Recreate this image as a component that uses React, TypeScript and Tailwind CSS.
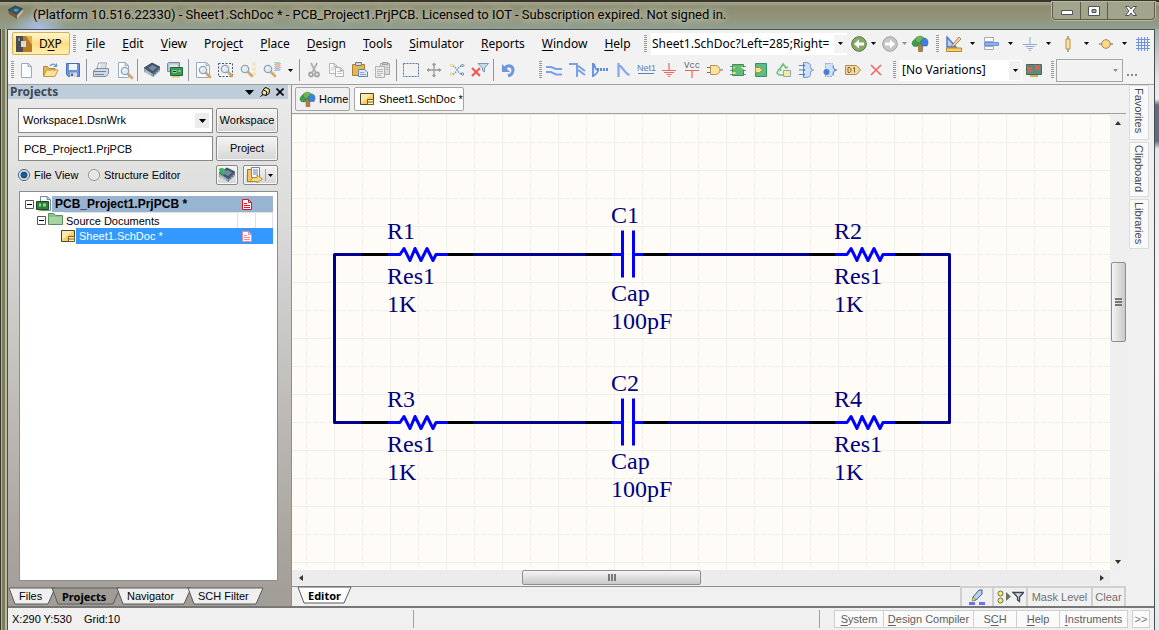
import { useState } from "react";
import type { ReactNode } from "react";

interface IconProps {
  children: ReactNode;
  size?: string;
}

function Icon({ children, size = "w-4 h-4" }: IconProps) {
  return (
    <svg viewBox="0 0 16 16" className={`${size} shrink-0 overflow-visible`} fill="none" aria-hidden="true">
      {children}
    </svg>
  );
}

/* ---------- shared icon parts ---------- */

function Lens({ x = 0, y = 0 }: { x?: number; y?: number }) {
  return (
    <g transform={`translate(${x} ${y})`}>
      <path d="M8 8l4 4" stroke="#d0a868" strokeWidth="2.6" strokeLinecap="round" />
      <circle cx="5" cy="5" r="3.7" fill="#dcecf6" stroke="#94a3b0" strokeWidth="1.3" />
      <path d="M3 5a2 2 0 0 1 2-2" stroke="#fff" strokeWidth="1" />
    </g>
  );
}

function Sheet({ x = 2, y = 0, w = 11, h = 14, line = "#9aa9c2" }: { x?: number; y?: number; w?: number; h?: number; line?: string }) {
  return (
    <g transform={`translate(${x} ${y})`}>
      <path d={`M.5 .5h${w - 4}l3 3v${h - 3}h-${w - 1}z`} fill="#fbfdff" stroke={line} />
      <path d={`M${w - 4} .5v3h3`} fill="#d7e1ee" stroke={line} />
    </g>
  );
}

function TreeShape() {
  return (
    <>
      <path d="M6.500 7h4v8.500h-4z" fill="#b0803c" stroke="#7d5a2b" strokeWidth=".6" />
      <path d="M0 8c0-3 2-5 5-5l2 2-1 5c-2 1-5 1-6-2z" fill="#39a045" stroke="#23702f" strokeWidth=".5" />
      <path d="M3 3c1-3 7-4 9-1l-3 4-4 1z" fill="#6db552" stroke="#2e7a34" strokeWidth=".5" />
      <path d="M8 6l4-4c4 0 5 4 3 8l-5 0z" fill="#3b82d8" stroke="#24568c" strokeWidth=".5" />
    </>
  );
}

function SchDocIcon() {
  return (
    <Icon>
      <path d="M1.500 2.500h13v11h-13z" fill="#fbcf62" stroke="#4a4432" />
      <path d="M2 3h11L2 12z" fill="#fdeaae" />
      <path d="M8.500 8.500h6v5h-6zM8.500 11h6" fill="#fff3c4" stroke="#7a5f14" />
    </Icon>
  );
}

function Chip() {
  return (
    <>
      <path d="M0 6l8-5 8 4-7 7z" fill="#43566b" stroke="#243445" strokeWidth=".7" />
      <path d="M0 6l9 6v3L0 10z" fill="#93a3b5" />
      <path d="M9 12l7-7v4l-7 6z" fill="#64788d" />
      <path d="M4 6l4.500-3L13 5.500 9 9z" fill="#75899f" />
      <path d="M2 9v2M4 10v2.500M6 11.500v2.500M11 12v2M13 10v2.500M15 8v2.500" stroke="#e8edf3" strokeWidth=".8" />
    </>
  );
}

/* ---------- toolbar icons ---------- */

const fileIcons: ReactNode[] = [
  <Sheet x={2} y={1} />,
  <>
    <path d="M1.500 14V4.500h4l1.500 2h6V14z" fill="#e6b455" stroke="#b48a35" />
    <path d="M1.500 14.500l3-6.500h11.500l-3 6.500z" fill="#fde09a" stroke="#c79a43" />
    <path d="M8 4c2-3 5-2 6 0M14.500 1.500v3h-3" stroke="#6d93c9" strokeWidth="1.200" />
  </>,
  <>
    <path d="M1.500 1.500h13v13h-11l-2-2z" fill="#6d91dc" stroke="#4c6cb4" />
    <path d="M4 2h8v6H4z" fill="#f0f5fd" />
    <path d="M5 10.500h7V15H5z" fill="#d3dbe8" />
    <path d="M6 11.500h2V14H6z" fill="#46619f" />
  </>,
];

const printIcons: ReactNode[] = [
  <>
    <path d="M4 7l1.500-6h8L12 7z" fill="#fff" stroke="#8f9cb1" />
    <path d="M7 3h5M6.500 5h5" stroke="#b4bfcd" />
    <path d="M.5 9L3 6.500h12.500v5L13 14.500H.5z" fill="#cfd8e3" stroke="#8390a4" />
    <path d="M1 9.500h12M2 12.500h9" stroke="#76849a" />
  </>,
  <>
    <Sheet x={2} y={0} w={11} h={15} />
    <Lens x={4} y={4} />
  </>,
];

const deviceIcons: ReactNode[] = [
  <Chip />,
  <>
    <path d="M.5 1.500l1-1h11v9H.5z" fill="#b5c4d4" stroke="#7c8b9c" />
    <path d="M2.500 2.500h8v3h-8z" fill="#dfe8f1" />
    <path d="M3.500 5.500h12v8h-12z" fill="#3d9a5c" stroke="#22683a" />
    <path d="M5.500 8h4v3h-4zM11.500 8h2v2h-2z" fill="#8fd09c" />
    <path d="M6 9h3v1H6z" fill="#123f22" />
    <path d="M5 14h8v1.500H5z" fill="#e4c763" />
  </>,
];

const zoomIcons: ReactNode[] = [
  <>
    <Sheet x={1} y={0} w={14} h={15} />
    <Lens x={3} y={3} />
  </>,
  <>
    <path d="M.5 1.500h14v13H.5z" stroke="#3e5774" strokeDasharray="2 1.500" />
    <Lens x={2} y={2} />
  </>,
  <>
    <Lens x={-1} y={2} />
    <path d="M13 .5L14.500 2 13 3.500 11.500 2zM13 5.500L14.500 7 13 8.500 11.500 7zM13 10.500l1.500 1.500-1.500 1.500-1.500-1.500z" stroke="#e6cf7a" fill="#fff8d8" strokeWidth=".8" />
  </>,
  <>
    <Lens x={-1} y={2} />
    <path d="M10.500 .5h5M11.500 1.500h5M10.500 2.500h5" stroke="#67bd63" strokeDasharray="1 1" />
    <path d="M11.500 3.500h5M10.500 4.500h5M11.500 5.500h5" stroke="#ef7a73" strokeDasharray="1 1" />
    <path d="M10.500 6.500h5M11.500 7.500h5M10.500 8.500h5" stroke="#6c9be0" strokeDasharray="1 1" />
  </>,
];

const clipIcons: ReactNode[] = [
  <>
    <path d="M5 1l4.500 9M11 1L6.500 10" stroke="#b0b0b0" strokeWidth="1.800" />
    <circle cx="5" cy="12.500" r="2" stroke="#a5a5a5" strokeWidth="1.800" />
    <circle cx="11" cy="12.500" r="2" stroke="#a5a5a5" strokeWidth="1.800" />
  </>,
  <>
    <Sheet x={0} y={1} w={9} h={10} line="#b5b5b5" />
    <Sheet x={6} y={5} w={9} h={9} line="#b0b0b0" />
    <path d="M2 6h4M2 8h3M8 9.500h5M8 11.500h5" stroke="#c4c4c4" />
  </>,
  <>
    <path d="M.5 2.500h12v11H.5z" fill="#e8b64e" stroke="#a9802f" />
    <path d="M3.500 .5h6v3h-6z" fill="#cfd5de" stroke="#75808f" />
    <path d="M6.500 7.500h6l3 2.500v4.500h-9z" fill="#dce9f8" stroke="#6483ad" />
    <path d="M8 10.500h4M8 12.500h6" stroke="#8aa5cb" />
  </>,
  <>
    <path d="M5.500 1.500h9v11h-9z" fill="#d8d8d8" stroke="#a9a9a9" />
    <path d="M7.500 .5h5v2h-5z" fill="#c3c3c3" stroke="#a0a0a0" />
    <path d="M.5 4.500h9v11h-9z" fill="#ececec" stroke="#b1b1b1" />
    <path d="M2 7.500h6M2 9.500h6M2 11.500h6M2 13.500h4M11 5.500h2M11 7.500h2" stroke="#b8b8b8" />
  </>,
];

const editIcons: ReactNode[] = [
  <path d="M.5 1.500h15v13H.5z" stroke="#5375a8" strokeDasharray="2 1" />,
  <path d="M8 1.500v13M1.500 8h13M6.500 3L8 1.500 9.500 3M6.500 13L8 14.500 9.500 13M3 6.500L1.500 8 3 9.500M13 6.500L14.500 8 13 9.500" stroke="#9a9a9a" strokeWidth="1.300" />,
  <>
    <path d="M4 4c3 0 5 8 9 8M4 12c3 0 5-8 9-8" stroke="#6f93b5" strokeDasharray="1.500 1" strokeWidth="1.500" />
    <path d="M2.500 2L4 3.500 2.500 5 1 3.500zM2.500 10.500L4 12l-1.500 1.500L1 12z" fill="#fff6c7" stroke="#d9c263" strokeWidth=".8" />
    <path d="M13.500 2L15 3.500 13.500 5 12 3.500zM13.500 10.500L15 12l-1.500 1.500L12 12z" fill="#cfe2e8" stroke="#45708c" strokeWidth=".8" />
  </>,
  <>
    <path d="M6 1.500h10.500L12.500 6v4l-2-1.500V6z" fill="#c5d8ec" stroke="#7898bd" />
    <path d="M0 6l8 8M8 6l-8 8" stroke="#ee5a50" strokeWidth="2.200" />
  </>,
];

const wiringIcons: ReactNode[] = [
  <path d="M0 5h5l5 2h6M0 10h5l5 2.500h6" stroke="#7aa0ea" strokeWidth="2" />,
  <path d="M0 2h8v13M8 4c3 0 3 2 8 5M8 8c3 0 3 2 8 5" stroke="#7aa0ea" strokeWidth="2" />,
  <>
    <path d="M1 1v14" stroke="#5d8be0" strokeWidth="1.800" />
    <path d="M1 2c3 0 1 5.500 4 5.500S4 13 1 14" stroke="#5d8be0" strokeWidth="1.600" />
    <path d="M5 7.500h11" stroke="#5d8be0" strokeWidth="3" strokeDasharray="2 1" />
  </>,
  <path d="M3.500 1v14M3.500 4h2l5 6c1 2 3 2.500 4 3" stroke="#83a7ee" strokeWidth="2.200" />,
  <>
    <text x="-1" y="9" fontSize="9" fill="#5b7fbd" fontFamily="Liberation Sans, sans-serif">
      Net1
    </text>
    <path d="M0 11.500h16" stroke="#5b7fbd" />
  </>,
  <path d="M8 1v7M1 8.500h14M3 10.500h10M5.500 12.500h5M7 14.500h2" stroke="#e9695f" strokeWidth="1.200" />,
  <>
    <text x="0" y="6" fontSize="9" fill="#5f5f6b" fontFamily="Liberation Mono, monospace">
      Vcc
    </text>
    <path d="M1 8.500h14M8 8.500v7.500" stroke="#e8645a" strokeWidth="1.200" />
  </>,
  <>
    <path d="M0 5.500h4M0 10.500h4M12 8h4" stroke="#6f6f6f" />
    <path d="M3.500 3.500h5c3 0 4.500 2.500 4.500 4.500s-1.500 4.500-4.500 4.500h-5z" fill="#fbe39c" stroke="#b5905a" />
  </>,
  <>
    <path d="M0 4.500h16M0 8.500h16M0 12.500h16" stroke="#5b8dd6" />
    <path d="M2.500 2.500h11v11h-11z" fill="#62ba76" stroke="#3e8f57" />
    <path d="M2.500 5h3l-1.500 2zM10 5h4v3zM2.500 10h3v2h-3z" fill="#f8e46e" />
  </>,
  <>
    <path d="M2.500 1.500h11v13h-11z" fill="#5cbd85" stroke="#3b9164" />
    <path d="M2.500 5.500h4l3 2.500-3 2.500h-4z" fill="#fbe67a" stroke="#a5924e" />
  </>,
  <>
    <path d="M4 7l3-5 3 4M12 5l-2 1-1-2M3 7l-2 4 2 2h4M2 8l2-1 1 2" stroke="#6ebf78" strokeWidth="1.600" />
    <path d="M7.500 8.500h7v6h-7z" fill="#faeaa0" stroke="#8aa3c8" />
  </>,
  <>
    <path d="M4.500 .5c6 0 7 1 7 4 0 2 1 3.500 3 3.500-2 0-3 1.500-3 3.500 0 3-1 4-7 4z" fill="#cfe0f8" stroke="#6b90cc" />
    <path d="M0 3.500h6M0 8h6M0 12.500h6M4 2l2 1.500L4 5M4 6.500L6 8 4 9.500M4 11l2 1.500L4 14" stroke="#4e7fcc" />
  </>,
  <>
    <path d="M3.500 1.500h5c3 0 3 1 3 3s1 3.500 3 3.500c-2 0-3 1.500-3 3.500s0 3-3 3h-5z" fill="#cfe0f8" stroke="#86a7dc" strokeDasharray="2 1" />
    <path d="M11 4c0 2 1 4 3.500 4-2.500 0-3.500 2-3.500 5" stroke="#4e7fcc" />
    <circle cx="4.500" cy="10" r="3" fill="#4a7fd0" />
  </>,
  <>
    <path d="M.5 3.500h11l4 4.500-4 4.500H.5z" fill="#f6d99b" stroke="#b08a54" />
    <path d="M3 5.500v5M3 5.500h1.500c2 0 2 5 0 5H3M8 6.500l1.500-1v5" stroke="#7d6236" />
  </>,
  <path d="M3 3l10 10M13 3L3 13" stroke="#ee6a5f" strokeWidth="1.600" />,
];

/* ---------- small controls ---------- */

function Handle() {
  return (
    <div className="w-[3px] h-[18px] shrink-0 bg-[repeating-linear-gradient(to_bottom,#9a9a9a_0px,#9a9a9a_1px,transparent_1px,transparent_2px)]" />
  );
}

function Divider() {
  return <div className="w-px h-[22px] mx-[2px] shrink-0 bg-[#8f959c]" />;
}

function Caret({ muted = false }: { muted?: boolean }) {
  return (
    <svg viewBox="0 0 5 3" className="w-[5px] h-[3px] shrink-0" aria-hidden="true">
      <path d="M0 0h5L2.500 3z" fill={muted ? "#8f8f8f" : "#000"} />
    </svg>
  );
}

function ToolButtons({ icons, label }: { icons: ReactNode[]; label: string }) {
  return (
    <div className="flex shrink-0">
      {icons.map((icon, i) => (
        <button key={i} type="button" aria-label={`${label} ${i + 1}`} className="w-[23px] h-[23px] flex items-center justify-center">
          <Icon>{icon}</Icon>
        </button>
      ))}
    </div>
  );
}

function MenuTool({ icon, label, muted }: { icon: ReactNode; label: string; muted?: boolean }) {
  return (
    <button type="button" aria-label={label} className="flex items-center h-6 w-[38px] pl-[7px] gap-[8px] shrink-0">
      <Icon>{icon}</Icon>
      <Caret muted={muted} />
    </button>
  );
}

/* Text with its mnemonic letter underlined */
function Mnemonic({ text, at }: { text: string; at: number }) {
  return (
    <span>
      {text.slice(0, at)}
      <span className="underline underline-offset-2">{text[at]}</span>
      {text.slice(at + 1)}
    </span>
  );
}

/* ---------- window chrome ---------- */

function TitleBar() {
  return (
    <header className="flex items-start h-[29px] shrink-0 pl-[8px] border-t-2 border-[#38352b] bg-[radial-gradient(ellipse_28px_16px_at_38px_26px,#a9bfe8_0%,transparent_100%),linear-gradient(to_bottom,#a5a68c_0px,#8b8c70_5px,#929378_16px,#8fa298_29px)]">
      <div className="mt-[3px]">
        <Icon>
          <path d="M0 5l7-4 8 3-6 6z" fill="#35526b" stroke="#203242" strokeWidth=".7" />
          <path d="M0 5l9 5v4L1 9z" fill="#6d5c42" />
          <path d="M9 10l6-6v3l-6 7z" fill="#c9b88f" />
          <path d="M5 5l3-1.500L11 5 8 7z" fill="#4ba3c7" />
        </Icon>
      </div>
      <h1 className="ml-[9px] mt-[3px] flex-1 text-[13px] leading-[20px] whitespace-nowrap text-black [text-shadow:0_0_6px_#d5d6c4,0_0_10px_#d5d6c4]">
        (Platform 10.516.22330) - Sheet1.SchDoc * - PCB_Project1.PrjPCB. Licensed to IOT - Subscription expired. Not signed in.
      </h1>
      <div className="flex h-[18px] mr-1 border border-t-0 border-[#5c5d4c] rounded-b-[4px] bg-[#a3a48c] shadow-[0_0_0_1px_#b9baa6]">
        <button type="button" aria-label="Minimize" className="w-[28px] flex items-center justify-center border-r border-[#5c5d4c]">
          <svg viewBox="0 0 12 5" className="w-3 h-[5px] mt-[4px]">
            <path d="M.5 .5h11v4H.5z" fill="#fff" stroke="#50545e" />
          </svg>
        </button>
        <button type="button" aria-label="Maximize" className="w-[27px] flex items-center justify-center border-r border-[#5c5d4c]">
          <svg viewBox="0 0 12 10" className="w-3 h-[10px]">
            <path d="M.5 .5h11v9H.5zM4 3.500v3h4v-3z" fill="#fff" fillRule="evenodd" stroke="#50545e" />
          </svg>
        </button>
        <button type="button" aria-label="Close" className="w-[46px] flex items-center justify-center">
          <svg viewBox="0 0 12 10" className="w-3 h-[10px]">
            <path d="M.5 .5H4l2 2.500L8 .5h3.500L8 5l3.500 4.500H8L6 7 4 9.500H.5L4 5z" fill="#fff" stroke="#50545e" />
          </svg>
        </button>
      </div>
    </header>
  );
}

const menus = [
  { text: "File", at: 0 },
  { text: "Edit", at: 0 },
  { text: "View", at: 0 },
  { text: "Project", at: 5 },
  { text: "Place", at: 0 },
  { text: "Design", at: 0 },
  { text: "Tools", at: 0 },
  { text: "Simulator", at: 0 },
  { text: "Reports", at: 0 },
  { text: "Window", at: 0 },
  { text: "Help", at: 0 },
];

function MenuBar() {
  return (
    <div className="flex items-center h-[27px] shrink-0 pl-[4px]">
      <button
        type="button"
        className="flex items-center gap-[7px] w-[58px] h-[23px] pl-[3px] border border-[#d8b04e] rounded-[2px] bg-linear-to-b from-[#fff6d2] via-[#ffdf85] to-[#ffeeb0] text-[12px]"
      >
        <Icon>
          <path d="M0 0h7v16H0z" fill="#4c4c4c" />
          <path d="M5 5h4v6H5z" fill="#d8d8d8" />
          <path d="M7 0h9v16H7v-5h3V5H7z" fill="#b87a24" />
          <path d="M10 0h6v9z" fill="#e4b15a" />
          <path d="M2 2h2v3H2z" fill="#8a8a8a" />
        </Icon>
        <Mnemonic text="DXP" at={1} />
      </button>
      <div className="w-[3px]" />
      <Handle />
      <nav className="flex gap-px w-[564px] shrink-0 pl-[2px] text-[12px] leading-[20px]">
        {menus.map((m) => (
          <button key={m.text} type="button" className="px-2">
            <Mnemonic text={m.text} at={m.at} />
          </button>
        ))}
      </nav>
      <div className="w-[4px]" />
      <Handle />
      <label className="flex items-center ml-[4px] w-[196px] h-[22px] shrink-0 bg-white">
        <input
          aria-label="Address"
          defaultValue="Sheet1.SchDoc?Left=285;Right=1110"
          className="w-[179px] mr-[4px] h-[20px] pl-px text-[12px] bg-transparent outline-none"
        />
        <span className="flex items-center justify-center w-[13px] h-[18px] bg-[#f3f3f3]">
          <Caret />
        </span>
      </label>
      <div className="flex items-center ml-[4px]">
        <button type="button" aria-label="Back" className="flex items-center gap-[4px] w-[31px]">
          <Icon>
            <circle cx="8" cy="8" r="7.300" fill="#88a868" stroke="#577544" />
            <path d="M3 8l5-4.500v3h5v3H8v3z" fill="#fff" />
          </Icon>
          <Caret />
        </button>
        <button type="button" aria-label="Forward" className="flex items-center gap-[4px] w-[30px]">
          <Icon>
            <circle cx="8" cy="8" r="7.300" fill="#c6c6c6" stroke="#a2a2a2" />
            <path d="M13 8L8 3.500v3H3v3h5v3z" fill="#fff" />
          </Icon>
          <Caret muted />
        </button>
        <button type="button" aria-label="Home page">
          <Icon>
            <TreeShape />
          </Icon>
        </button>
      </div>
      <div className="w-[8px]" />
      <Handle />
      <div className="flex items-center">
        <MenuTool
          label="Utilities"
          icon={
            <>
              <path d="M1 1v10h9z" fill="#b8cdf3" stroke="#4c76c6" strokeWidth="1.400" />
              <path d="M6 9l7-8 2 2-7 7-3 1z" fill="#efd3a8" stroke="#a06f4b" strokeWidth=".8" />
              <path d="M.5 12h15v3.500H.5z" fill="#f7cf63" stroke="#b38a35" />
            </>
          }
        />
        <MenuTool
          label="Align"
          icon={
            <>
              <path d="M.5 1.500h9v4h-9zM.5 10.500h9v3h-9z" fill="#fff" stroke="#9aa9c4" />
              <path d="M.5 6.500h14v3H.5z" fill="#8db1ea" stroke="#6e93d2" />
            </>
          }
        />
        <MenuTool label="Power sources" icon={<path d="M8 1v7M1 8.500h14M3.500 10.500h9M5.500 12.500h5M7 14.500h2" stroke="#8fa9d8" />} />
        <MenuTool
          label="Digital devices"
          icon={
            <>
              <path d="M8 0v16" stroke="#5b5b5b" />
              <path d="M6 3h4v10H6z" fill="#fbe29a" stroke="#b88f4c" />
            </>
          }
        />
        <MenuTool
          label="Simulation sources"
          icon={
            <>
              <path d="M1 8h14" stroke="#5b5b5b" />
              <circle cx="8" cy="8" r="4.300" fill="#fbd98b" stroke="#b0803c" />
            </>
          }
        />
        <button type="button" aria-label="Grids" className="ml-[6px]">
          <Icon>
            <path d="M3.500 1v14M6.500 1v14M9.500 1v14M12.500 1v14M1 3.500h14M1 6.500h14M1 9.500h14M1 12.500h14" stroke="#6f93e2" />
          </Icon>
        </button>
      </div>
    </div>
  );
}

function ToolBar() {
  return (
    <div className="flex items-center h-[28px] shrink-0 pl-[3px] pb-px border-b border-[#a0a0a0]">
      <Handle />
      <div className="w-px" />
      <ToolButtons icons={fileIcons} label="File" />
      <Divider />
      <ToolButtons icons={printIcons} label="Print" />
      <Divider />
      <ToolButtons icons={deviceIcons} label="Device" />
      <Divider />
      <ToolButtons icons={zoomIcons} label="Zoom" />
      <button type="button" aria-label="More" className="flex items-center justify-center w-[14px] h-5">
        <Caret />
      </button>
      <Divider />
      <ToolButtons icons={clipIcons} label="Clipboard" />
      <Divider />
      <ToolButtons icons={editIcons} label="Edit" />
      <Divider />
      <ToolButtons
        label="Undo"
        icons={[
          <>
            <path d="M5 6c3-4 8-2 8 2 0 3-2 5-5 6" stroke="#6f97dc" strokeWidth="3" />
            <path d="M2 2v8h8z" fill="#6f97dc" />
          </>,
        ]}
      />
      <div className="w-[20px]" />
      <Handle />
      <ToolButtons icons={wiringIcons} label="Wiring" />
      <div className="w-[6px]" />
      <Handle />
      <div className="relative ml-[3px] w-[123px] h-[21px] shrink-0 bg-white">
        <select aria-label="Variations" className="block appearance-none w-full h-full pl-[3px] text-[12px] leading-[20px] bg-transparent outline-none">
          <option>[No Variations]</option>
        </select>
        <span className="absolute right-px top-px w-[12px] h-[19px] flex items-center justify-center bg-[#f0f0f0] pointer-events-none">
          <Caret />
        </span>
      </div>
      <ToolButtons
        label="Variants"
        icons={[
          <>
            <path d="M.5 2.500h15v10H.5z" fill="#5b8a76" stroke="#456a5a" />
            <path d="M4 13h8v2H4z" fill="#c9b14d" />
            <path d="M1 5l5 5M6 5l-5 5M9 3l5 5M14 3L9 8" stroke="#ef5b57" strokeWidth="1.600" />
          </>,
        ]}
      />
      <div className="w-[6px]" />
      <Handle />
      <div className="relative ml-[2px] w-[67px] h-[23px] shrink-0">
        <select aria-label="Filter" disabled className="block appearance-none w-full h-full border border-[#a5a5a5] bg-[#f2f2f2]">
          <option></option>
        </select>
        <span className="absolute right-[5px] top-[10px] pointer-events-none">
          <Caret muted />
        </span>
      </div>
      <button type="button" aria-label="Overflow" className="ml-[4px] mt-[10px] flex gap-[2px]">
        <span className="w-[2px] h-[2px] bg-[#8a8a8a]" />
        <span className="w-[2px] h-[2px] bg-[#8a8a8a]" />
        <span className="w-[2px] h-[2px] bg-[#8a8a8a]" />
      </button>
    </div>
  );
}

/* ---------- left panel ---------- */

function SlantedTab({ label, width, fill, bold }: { label: string; width: number; fill: string; bold?: boolean }) {
  return (
    <button type="button" className="relative h-[17px] shrink-0 -mr-[3px] pl-[10px] text-left" style={{ width }}>
      <svg className="absolute inset-0 w-full h-full overflow-visible" aria-hidden="true">
        <polygon points={`0,0 ${width},0 ${width - 7},16 6,16`} fill={fill} stroke="#5a5a5a" />
      </svg>
      <span className={`relative block text-[11px] leading-[15px] ${bold ? "font-bold font-['Noto_Sans',sans-serif]" : ""}`}>{label}</span>
    </button>
  );
}

function ModifiedMark({ color }: { color: string }) {
  return (
    <svg viewBox="0 0 10 11" className="w-[10px] h-[11px]" aria-hidden="true">
      <path d="M.5 .5h6l3 3v7h-9z" fill="#fff" stroke={color} />
      <path d="M6.500 .5v3h3M2 4.500h3M2 6.500h6M2 8.500h6" stroke={color} fill="none" />
    </svg>
  );
}

function Expander() {
  return (
    <svg viewBox="0 0 9 9" className="w-[9px] h-[9px] shrink-0" aria-hidden="true">
      <path d="M.5 .5h8v8h-8z" fill="#fff" stroke="#555" />
      <path d="M2 4.500h5" stroke="#000" />
    </svg>
  );
}

function ProjectTree() {
  return (
    <ul className="flex-1 min-h-0 pt-[4px] pl-[5px] pr-[4px] bg-white border border-[#878d93] text-[11px] leading-[16px]">
      <li>
        <div className="flex items-center h-4">
          <Expander />
          <div className="w-[2px]" />
          <Icon>
            <Sheet x={4} y={0} w={11} h={14} line="#6f86a8" />
            <path d="M.5 5.500h12v8H.5z" fill="#2f7d3a" stroke="#174c20" />
            <path d="M3 7.500h2v3H3zM7 7.500h3v3H7z" fill="#9ed48b" />
            <path d="M3 14v1.500M6 14v1.500M9 14v1.500" stroke="#cfa93c" />
          </Icon>
          <div className="flex items-center flex-1 h-4 pl-[3px] bg-[#99b4d1]">
            <span className="flex-1 font-bold text-[12px]">PCB_Project1.PrjPCB *</span>
            <span className="w-[31px]">
              <ModifiedMark color="#e8101c" />
            </span>
          </div>
        </div>
        <ul>
          <li>
            <div className="flex items-center h-4 pl-[12px]">
              <Expander />
              <div className="w-[2px]" />
              <Icon>
                <path d="M.5 12.500v-11h5l2 2h7v9z" fill="#8cc28c" stroke="#5a8d5f" />
                <path d="M1 5h13v7H1z" fill="#a5d3a2" />
              </Icon>
              <span className="flex-1 pl-[2px] border-t border-[#e2e2e2] h-4">Source Documents</span>
              <span className="w-[18px] h-4 border-l border-t border-[#e2e2e2]" />
              <span className="w-[18px] h-4 border-x border-t border-[#e2e2e2]" />
            </div>
            <ul>
              <li className="flex items-center h-4 pl-[35px]">
                <SchDocIcon />
                <button type="button" className="flex items-center flex-1 h-4 pl-[3px] bg-[#3399ff] text-white text-left">
                  <span className="flex-1">Sheet1.SchDoc *</span>
                  <span className="w-[31px]">
                    <ModifiedMark color="#f28a94" />
                  </span>
                </button>
              </li>
            </ul>
          </li>
        </ul>
      </li>
    </ul>
  );
}

const panelButton = "border border-[#8a8a8a] rounded-[2px] bg-linear-to-b from-[#f4f4f4] to-[#d6d6d6] shadow-[inset_0_0_0_1px_#fafafa]";
const radio =
  "appearance-none w-3 h-3 rounded-full border border-[#8e8f8f] bg-[#e6e6e6] shadow-[inset_0_0_0_1px_#f8f8f8] checked:border-[#41597a] checked:bg-[radial-gradient(circle,#1c6fb0_0px,#1b4a7c_3px,#e8f0f6_4px)]";

function ProjectsPanel() {
  const [view, setView] = useState("file");

  return (
    <aside className="flex flex-col w-[283px] shrink-0 bg-[linear-gradient(to_bottom,#ebebeb,#dcdcdb_25%,#a8a39c_90%,#a29d96)]">
      <div className="flex items-center h-[14px] w-[280px] shrink-0 pl-[2px] pr-[4px] bg-[#bfcddb]">
        <h2 className="flex-1 text-[12px] leading-[14px] font-bold text-[#3c4856] font-['Noto_Sans',sans-serif]">Projects</h2>
        <div className="flex items-center gap-[6px]">
          <button type="button" aria-label="Panel menu">
            <svg viewBox="0 0 9 5" className="w-[9px] h-[5px]">
              <path d="M0 0h9L4.500 5z" />
            </svg>
          </button>
          <button type="button" aria-label="Pin panel">
            <svg viewBox="0 0 10 10" className="w-[10px] h-[10px]">
              <path d="M4 1.500l2-1 3.500 2-.5 4-3 2-3.500-1-.5-2z" fill="#f2ea9a" stroke="#000" />
              <path d="M4 3l3 2-1 3M3 7.500L.5 9.500" stroke="#000" fill="none" />
            </svg>
          </button>
          <button type="button" aria-label="Close panel">
            <svg viewBox="0 0 8 8" className="w-2 h-2">
              <path d="M.5 .5l7 7M7.500 .5l-7 7" stroke="#000" strokeWidth="1.600" />
            </svg>
          </button>
        </div>
      </div>

      <div className="flex flex-col flex-1 min-h-0 w-[280px] pt-[9px] px-[10px] pb-[7px] text-[11px]">
        <div className="flex gap-[3px]">
          <div className="relative flex-1 h-[25px]">
            <select aria-label="Workspace" className="block appearance-none w-full h-full pl-[4px] bg-white border border-[#8a8a8a]">
              <option>Workspace1.DsnWrk</option>
            </select>
            <span className="absolute right-[4px] top-[5px] flex items-center justify-center w-[14px] h-[15px] bg-[#ececec] pointer-events-none">
              <svg viewBox="0 0 7 4" className="w-[7px] h-1">
                <path d="M0 0h7L3.500 4z" />
              </svg>
            </span>
          </div>
          <button type="button" className={`w-[62px] ${panelButton}`}>
            Workspace
          </button>
        </div>
        <div className="flex gap-[3px] mt-[3px]">
          <input aria-label="Project" defaultValue="PCB_Project1.PrjPCB" className="flex-1 min-w-0 h-[25px] pl-[5px] bg-white border border-[#8a8a8a]" />
          <button type="button" className={`w-[62px] ${panelButton}`}>
            Project
          </button>
        </div>

        <div className="flex items-center h-5 mt-[4px] mb-[6px]">
          <label className="flex items-center gap-[4px] w-[70px] whitespace-nowrap">
            <input type="radio" name="view" className={radio} checked={view === "file"} onChange={() => setView("file")} />
            File View
          </label>
          <label className="flex items-center gap-[4px] flex-1">
            <input type="radio" name="view" className={radio} checked={view === "structure"} onChange={() => setView("structure")} />
            Structure Editor
          </label>
          <button type="button" aria-label="Refresh" className={`flex items-center justify-center w-[22px] h-5 mr-[5px] ${panelButton}`}>
            <Icon>
              <Chip />
              <path d="M0 2c2-2 6-1 7 2L5 8 1 6z" fill="#3fae57" />
              <path d="M3 2l3 1-1 3z" fill="#4d9de0" />
            </Icon>
          </button>
          <button type="button" aria-label="Options" className={`flex items-center w-[35px] h-5 pl-[3px] ${panelButton}`}>
            <Icon>
              <path d="M.5 2.500h6v12h-6z" fill="#f5c659" stroke="#9f7a2b" />
              <path d="M4.500 .5h8v10h-8z" fill="#fff" stroke="#6f86b0" />
              <path d="M6 3h5M6 5h5M6 7h5" stroke="#5b7fc5" />
              <path d="M3 14.500l3-4h4V8l5.500 4-5.500 4v-1.500z" fill="#fbd87a" stroke="#a37d2f" strokeWidth=".8" />
            </Icon>
            <span className="w-px h-3 mx-[2px] bg-[#a0a0a0]" />
            <Caret />
          </button>
        </div>

        <div className="flex flex-1 min-h-0 pl-px">
          <ProjectTree />
        </div>
      </div>

      <div className="flex items-start h-[18px] shrink-0 pl-[1px]">
        <SlantedTab label="Files" width={46} fill="#f0f0f0" />
        <SlantedTab label="Projects" width={68} fill="#a09b94" bold />
        <SlantedTab label="Navigator" width={74} fill="#f0f0f0" />
        <SlantedTab label="SCH Filter" width={75} fill="#f0f0f0" />
      </div>
    </aside>
  );
}

/* ---------- schematic ---------- */

interface PartProps {
  x: number;
  y: number;
  name: string;
}

function Resistor({ x, y, name }: PartProps) {
  return (
    <g transform={`translate(${x} ${y})`}>
      <path d="M-28 0H0M57 0h26" stroke="#000" strokeWidth="3" />
      <path d="M-2 0h12l4-6 6 12 5-12 6 12 6-12 6 12 3-6h12" stroke="#0000ff" strokeWidth="3" fill="none" strokeLinejoin="round" />
      <text x="-3" y="-16">{name}</text>
      <text x="-3" y="29">Res1</text>
      <text x="-3" y="57">1K</text>
    </g>
  );
}

function Capacitor({ x, y, name }: PartProps) {
  return (
    <g transform={`translate(${x} ${y})`}>
      <path d="M-26 0H0M30 0h26" stroke="#000" strokeWidth="3" />
      <path d="M0 0h11M10.500-24v47M21.500-24v47M21 0h10" stroke="#0000ff" strokeWidth="3" />
      <text x="-1" y="-32">{name}</text>
      <text x="-1" y="46">Cap</text>
      <text x="-1" y="74">100pF</text>
    </g>
  );
}

function Schematic() {
  return (
    <svg className="block w-full h-full text-[24px] font-['Liberation_Serif',serif]" role="img" aria-label="Schematic sheet">
      <defs>
        <pattern id="grid" x="42" y="56" width="56" height="56" patternUnits="userSpaceOnUse">
          <path d="M.5 0v56M0 .5h56" stroke="#efefea" />
          <path d="M28.500 0v56M0 28.500h56" stroke="#efefea" strokeDasharray="5 2" />
        </pattern>
      </defs>
      <rect width="100%" height="100%" fill="#fffcf7" />
      <rect width="100%" height="100%" fill="url(#grid)" />
      <path
        d="M71 140.500H42.500v168H71M180 140.500h115M375 140.500h143M627 140.500h30.500v168H627M180 308.500h115M375 308.500h143"
        fill="none"
        stroke="#000090"
        strokeWidth="3"
        strokeLinejoin="round"
      />
      <g fill="#000080">
        <Resistor x={98} y={140.5} name="R1" />
        <Capacitor x={320} y={140.5} name="C1" />
        <Resistor x={545} y={140.5} name="R2" />
        <Resistor x={98} y={308.5} name="R3" />
        <Capacitor x={320} y={308.5} name="C2" />
        <Resistor x={545} y={308.5} name="R4" />
      </g>
    </svg>
  );
}

/* ---------- editor area ---------- */

function VerticalScroll() {
  return (
    <div className="flex flex-col items-center w-4 shrink-0 bg-[#efefef]">
      <div className="h-[17px] flex items-center">
        <svg viewBox="0 0 6 4" className="w-[6px] h-1">
          <path d="M0 4h6L3 0z" fill="#333" />
        </svg>
      </div>
      <div className="grow-[131]" />
      <div className="flex flex-col items-center justify-center gap-px w-[15px] h-[80px] border border-[#8f8f8f] rounded-[2px] bg-linear-to-r from-[#f5f5f5] to-[#c9c9c9]">
        <span className="w-[7px] h-[2px] bg-[#777]" />
        <span className="w-[7px] h-[2px] bg-[#777]" />
        <span className="w-[7px] h-[2px] bg-[#777]" />
      </div>
      <div className="grow-[212]" />
      <div className="h-[17px] flex items-center">
        <svg viewBox="0 0 6 4" className="w-[6px] h-1">
          <path d="M0 0h6L3 4z" fill="#333" />
        </svg>
      </div>
    </div>
  );
}

function HorizontalScroll() {
  return (
    <div className="flex items-center h-[15px] mb-px mr-4 shrink-0 bg-[#ececec]">
      <div className="w-[17px] flex justify-center">
        <svg viewBox="0 0 4 6" className="w-1 h-[6px]">
          <path d="M4 0v6L0 3z" fill="#333" />
        </svg>
      </div>
      <div className="grow-[213]" />
      <div className="flex items-center justify-center gap-px w-[179px] h-[15px] border border-[#8f8f8f] rounded-[2px] bg-linear-to-b from-[#f5f5f5] to-[#c9c9c9]">
        <span className="w-[2px] h-[7px] bg-[#777]" />
        <span className="w-[2px] h-[7px] bg-[#777]" />
        <span className="w-[2px] h-[7px] bg-[#777]" />
      </div>
      <div className="grow-[392]" />
      <div className="w-[17px] flex justify-center">
        <svg viewBox="0 0 4 6" className="w-1 h-[6px]">
          <path d="M0 0v6L4 3z" fill="#333" />
        </svg>
      </div>
    </div>
  );
}

const footerButton = "h-full border-l-2 border-t-2 border-[#cfcfcf] text-[#707070]";

function EditorArea() {
  return (
    <main className="flex flex-col flex-1 min-w-0 border-l border-[#8f8f8f]">
      <div className="flex items-start h-[29px] shrink-0 pt-[2px] pl-[3px] gap-[4px] border-b border-[#a0a0a0] text-[11px]">
        <button type="button" className="flex items-center gap-[4px] w-[55px] h-6 pl-[4px] border border-[#a5a5a5] rounded-[2px]">
          <Icon size="w-[15px] h-[15px]">
            <TreeShape />
          </Icon>
          Home
        </button>
        <button type="button" className="flex items-center gap-[4px] w-[110px] h-6 pl-[4px] whitespace-nowrap bg-white border border-[#a5a5a5] rounded-[2px]">
          <SchDocIcon />
          Sheet1.SchDoc *
        </button>
      </div>

      <div className="flex flex-1 min-h-0">
        <div className="flex-1 min-w-0">
          <Schematic />
        </div>
        <VerticalScroll />
      </div>
      <HorizontalScroll />

      <div className="flex h-[20px] shrink-0 text-[11px]">
        <div className="flex-1 pl-[6px] border-t border-[#8f8f8f]">
          <SlantedTab label="Editor" width={53} fill="#ffffff" bold />
        </div>
        <button type="button" aria-label="Highlight pen" className={`w-8 flex items-center justify-center ${footerButton}`}>
          <Icon>
            <path d="M4 8l6-7 3 0v4l-6 6H4z" fill="#bcd0ea" stroke="#3e5f94" />
            <path d="M4 8l3 3-4 1z" fill="#f2d75c" stroke="#7d6a28" strokeWidth=".6" />
            <path d="M0 13h6v3H0zM10 13h6v3h-6z" fill="#6a70ff" />
          </Icon>
        </button>
        <button type="button" aria-label="Filter mask" className={`w-[34px] flex items-center justify-center ${footerButton}`}>
          <svg viewBox="0 0 27 14" className="w-[27px] h-[14px]" fill="none">
            <circle cx="3.5" cy="3.5" r="2.500" fill="#f8f15a" stroke="#6b6b52" />
            <circle cx="3.5" cy="10.500" r="2.500" fill="#f8f15a" stroke="#6b6b52" />
            <path d="M9 2v9l5-4.500z" fill="#6f6f6f" />
            <path d="M16 2.500h10.500L22.500 7v4.500l-2-1.500V7z" fill="#d8dde6" stroke="#3e4654" strokeWidth="1.300" />
          </svg>
        </button>
        <button type="button" className={`w-[65px] ${footerButton}`}>
          Mask Level
        </button>
        <button type="button" className={`w-[35px] border-r-2 ${footerButton}`}>
          Clear
        </button>
      </div>
    </main>
  );
}

function SideTabs() {
  return (
    <aside className="flex flex-col items-start gap-[2px] w-7 shrink-0 pl-[3px] text-[11px] leading-[14px] text-[#45454f]">
      {["Favorites", "Clipboard", "Libraries"].map((label) => (
        <button key={label} type="button" className="w-[20px] h-[55px] pt-[2px] last:h-[50px] text-left bg-[#fafafa] border border-[#dcdcdc] [writing-mode:vertical-rl]">
          {label}
        </button>
      ))}
    </aside>
  );
}

function StatusBar() {
  return (
    <footer className="flex items-center h-[24px] shrink-0 border-t-2 border-[#777] bg-[#f0f0f0] text-[11px]">
      <div className="flex items-center w-[406px] h-[18px] pl-[4px] border-r border-[#a0a0a0]">
        <span className="w-[72px]">X:290 Y:530</span>
        <span>Grid:10</span>
      </div>
      <div className="flex-1 h-[18px] border-r border-[#a0a0a0]" />
      <div className="flex h-[18px] ml-[14px] border border-[#cfcfcf] bg-[#fafafa] text-[#606060] divide-x divide-[#cfcfcf]">
        <button type="button" className="w-[49px]"><Mnemonic text="System" at={0} /></button>
        <button type="button" className="w-[90px]"><Mnemonic text="Design Compiler" at={0} /></button>
        <button type="button" className="w-[43px]"><Mnemonic text="SCH" at={1} /></button>
        <button type="button" className="w-[43px]"><Mnemonic text="Help" at={0} /></button>
        <button type="button" className="w-[67px]"><Mnemonic text="Instruments" at={0} /></button>
      </div>
      <button type="button" className="w-[18px] h-[18px] ml-[4px] mr-[4px] border border-[#cfcfcf] bg-[#fafafa] text-[#8a7b68]">
        &gt;&gt;
      </button>
    </footer>
  );
}

export default function App() {
  return (
    <div className="flex flex-col w-full h-screen overflow-hidden bg-[#7f8060] font-['Liberation_Sans',Arial,sans-serif] text-black">
      <div className="font-['Roboto',sans-serif]">
        <TitleBar />
      </div>
      <div className="flex flex-1 min-h-0">
        <div className="w-[7px] shrink-0 bg-[linear-gradient(to_right,#3a382c_0px,#3a382c_1px,#b5b69c_1px,#b5b69c_2px,#7c7d5c_2px,#7c7d5c_5px,#b9baa2_5px,#b9baa2_7px)]" />
        <div className="flex flex-col flex-1 min-w-0 border-x border-t border-[#4a4f4c] bg-[#f0f0f0]">
          <div className="bg-[#f2f2f2] font-['Noto_Sans',sans-serif]">
            <MenuBar />
            <ToolBar />
          </div>
          <div className="flex flex-1 min-h-0">
            <ProjectsPanel />
            <EditorArea />
            <SideTabs />
          </div>
          <StatusBar />
        </div>
        <div className="w-[4px] shrink-0 bg-[linear-gradient(to_bottom,#9fb0ae_0px,#dfe6ec_50px,#e8eef4_70px,#5f6c86_76px,#5f6c86_112px,#dfe7f0_120px,#f4f8fb_300px,#dcecf2)]" />
      </div>
    </div>
  );
}
